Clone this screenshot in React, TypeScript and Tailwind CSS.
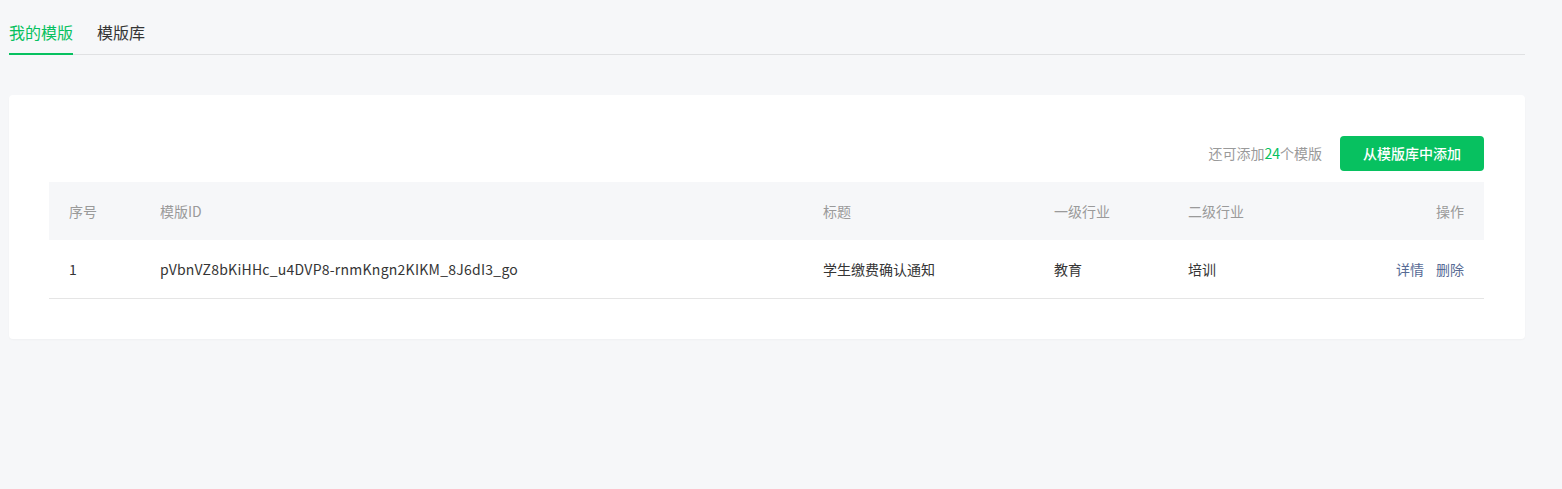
import React from 'react';

const font = { fontFamily: '"Noto Sans CJK SC", "Noto Sans", sans-serif' };

const rows = [
  {
    no: '1',
    id: 'pVbnVZ8bKiHHc_u4DVP8-rnmKngn2KIKM_8J6dI3_go',
    title: '学生缴费确认通知',
    first: '教育',
    second: '培训',
  },
];

const cols = 'grid grid-cols-[91px_663px_231px_134px_1fr_auto] items-center';

export default function App() {
  return (
    <div className="min-h-screen w-full bg-[#f6f7f9]" style={font}>
      <div className="pl-[9px] pr-[37px] pt-[20px]">
        {/* Tabs */}
        <div className="flex border-b border-[#e0e1e3] text-[16px] leading-[24px]">
          <div className="-mb-px border-b-2 border-[#07c160] pb-[9px] text-[#07c160]">我的模版</div>
          <div className="ml-[24px] pb-[9px] text-[#353535]">模版库</div>
        </div>

        {/* Card */}
        <div className="mt-[40px] rounded-[4px] bg-white pb-[40px] pl-[40px] pr-[41px] pt-[41px] shadow-[0_1px_2px_rgba(0,0,0,0.03)]">
          <div className="flex items-center justify-end">
            <span className="text-[14px] text-[#9a9a9a]">
              还可添加<span className="text-[#07c160]">24</span>个模版
            </span>
            <button className="ml-[18px] h-[35px] w-[144px] rounded-[4px] bg-[#07c160] text-[14px] font-medium text-white">
              从模版库中添加
            </button>
          </div>

          <div className="mt-[11px] text-[14px]">
            <div className={`${cols} h-[58px] bg-[#f6f7f9] text-[#9a9a9a]`}>
              <div className="pl-[20px]">序号</div>
              <div className="pl-[20px]">模版ID</div>
              <div className="pl-[20px]">标题</div>
              <div className="pl-[20px]">一级行业</div>
              <div className="pl-[20px]">二级行业</div>
              <div className="pr-[20px] text-right">操作</div>
            </div>
            {rows.map((r) => (
              <div key={r.id} className={`${cols} h-[59px] border-b border-[#e5e5e5] text-[#353535]`}>
                <div className="pl-[20px]">{r.no}</div>
                <div className="pl-[20px] tracking-[0.25px]">{r.id}</div>
                <div className="pl-[20px]">{r.title}</div>
                <div className="pl-[20px]">{r.first}</div>
                <div className="pl-[20px]">{r.second}</div>
                <div className="flex gap-[12px] pr-[20px] text-[#576b95]">
                  <span>详情</span>
                  <span>删除</span>
                </div>
              </div>
            ))}
          </div>
        </div>
      </div>
    </div>
  );
}
